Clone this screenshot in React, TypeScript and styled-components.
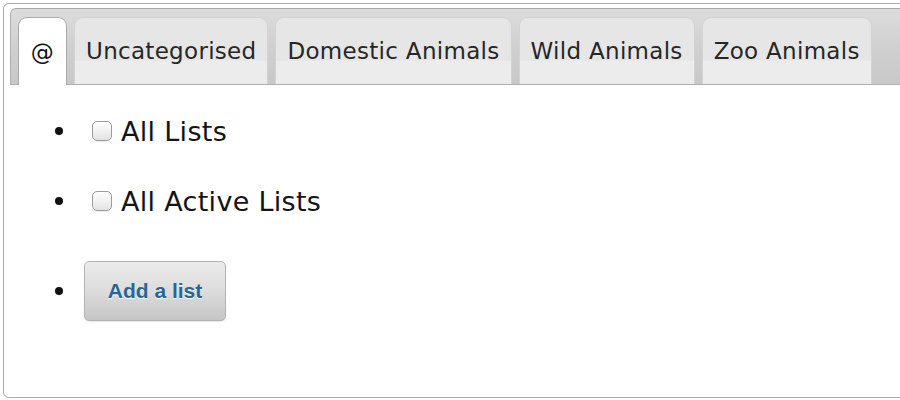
import styled, { createGlobalStyle } from "styled-components";

const tabs = ["@", "Uncategorised", "Domestic Animals", "Wild Animals", "Zoo Animals"];

const GlobalStyle = createGlobalStyle`
  html, body {
    margin: 0;
    padding: 0;
    background: #fff;
    overflow: hidden;
  }
`;

export default function App(): JSX.Element {
  return (
    <>
      <GlobalStyle />
      <Panel>
        <TabBar>
          {tabs.map((label, i) => (
            <Tab key={label} $active={i === 0}>
              {label}
            </Tab>
          ))}
        </TabBar>
        <List>
          <Item>
            <Check type="checkbox" />
            <Label>All Lists</Label>
          </Item>
          <Item>
            <Check type="checkbox" />
            <Label>All Active Lists</Label>
          </Item>
          <Item $gap={40}>
            <AddButton type="button">Add a list</AddButton>
          </Item>
        </List>
      </Panel>
    </>
  );
}

const Panel = styled.div`
  box-sizing: border-box;
  margin: 3px 0 0 3px;
  width: 940px;
  height: 395px;
  padding: 4px 6px 0 6px;
  border: 1px solid #aaaaaa;
  border-radius: 6px;
  background: #fff;
`;

const TabBar = styled.div`
  display: flex;
  align-items: flex-end;
  gap: 7px;
  height: 77px;
  box-sizing: border-box;
  padding: 0 7px;
  border: 1px solid #b0b0b0;
  border-top-color: #a8a8a8;
  border-radius: 6px 6px 0 0;
  background: linear-gradient(to bottom, #dcdcdc 0%, #d0d0d0 50%, #c8c8c8 100%);
`;

const Tab = styled.div<{ $active?: boolean }>`
  display: flex;
  align-items: center;
  justify-content: center;
  box-sizing: border-box;
  min-width: 49px;
  height: ${(p) => (p.$active ? "68px" : "67px")};
  margin-bottom: ${(p) => (p.$active ? "-1px" : "0")};
  padding: 0 11px;
  border: 1px solid ${(p) => (p.$active ? "#aaaaaa" : "#d3d3d3")};
  border-bottom: none;
  border-radius: 9px 9px 0 0;
  background: ${(p) =>
    p.$active
      ? "#ffffff"
      : "linear-gradient(to bottom, #e6e6e6 0%, #e6e6e6 64%, #ececec 66%, #ececec 100%)"};
  font-family: "DejaVu Sans", Verdana, sans-serif;
  font-size: 23px;
  letter-spacing: 0.3px;
  color: ${(p) => (p.$active ? "#111111" : "#262626")};
  white-space: nowrap;
`;

const List = styled.ul`
  list-style: none;
  margin: 0;
  padding: 26px 0 0 45px;
`;

const Item = styled.li<{ $gap?: number }>`
  display: flex;
  align-items: center;
  min-height: 40px;
  margin-top: ${(p) => p.$gap ?? 30}px;

  &:first-child {
    margin-top: 0;
  }

  &::before {
    content: "";
    width: 8px;
    height: 8px;
    border-radius: 50%;
    background: #111;
    margin-right: 21px;
    flex: none;
  }
`;

const Check = styled.input`
  appearance: none;
  box-sizing: border-box;
  width: 20px;
  height: 20px;
  margin: 0 9px 0 8px;
  border: 1px solid #9c9c9c;
  border-radius: 5px;
  background: linear-gradient(to bottom, #ffffff 0%, #f2f2f2 50%, #e2e2e2 100%);
  box-shadow: inset 0 1px 1px rgba(255, 255, 255, 0.8), 0 1px 1px rgba(0, 0, 0, 0.08);
`;

const Label = styled.span`
  font-family: "DejaVu Sans", Verdana, sans-serif;
  font-size: 27px;
  letter-spacing: 0.3px;
  color: #141414;
`;

const AddButton = styled.button`
  box-sizing: border-box;
  width: 142px;
  height: 60px;
  padding: 0;
  border: 1px solid #b3b3b3;
  border-radius: 5px;
  background: linear-gradient(to bottom, #ebebeb 0%, #dcdcdc 50%, #c6c6c6 100%);
  box-shadow: 0 1px 1px rgba(0, 0, 0, 0.1);
  font-family: "Liberation Sans", Arial, sans-serif;
  font-weight: bold;
  font-size: 21px;
  letter-spacing: 0;
  color: #2a6496;
  text-shadow: 0 1px 0 #ffffff;
`;
